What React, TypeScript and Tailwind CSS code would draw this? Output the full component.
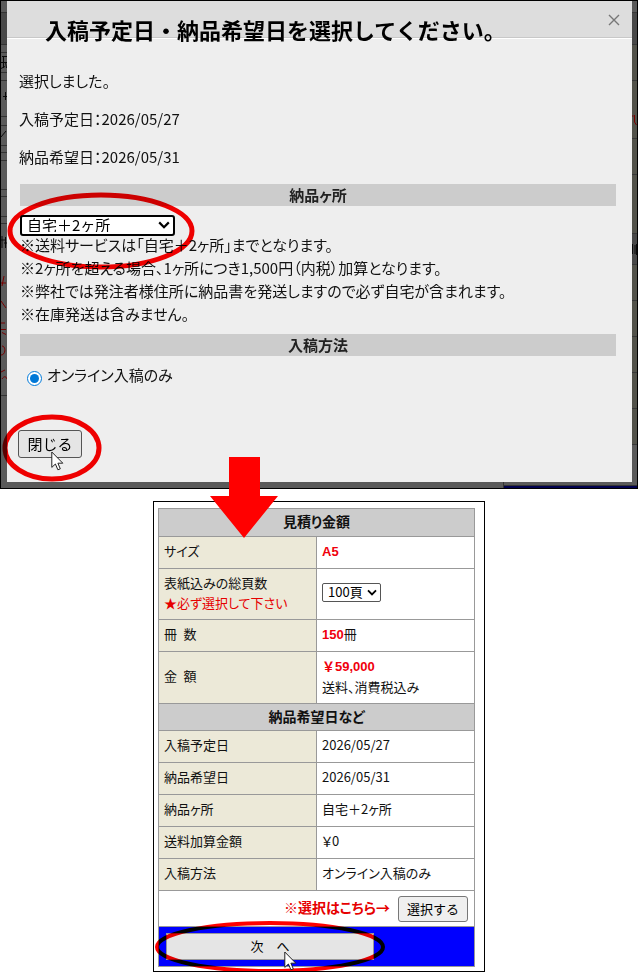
import React from "react";

const NOTES = [
  "※送料サービスは「自宅＋2ヶ所」までとなります。",
  "※2ヶ所を超える場合、1ヶ所につき1,500円（内税）加算となります。",
  "※弊社では発注者様住所に納品書を発送しますので必ず自宅が含まれます。",
  "※在庫発送は含みません。",
];

const DELIVERY_ROWS: [string, string][] = [
  ["入稿予定日", "2026/05/27"],
  ["納品希望日", "2026/05/31"],
  ["納品ヶ所", "自宅＋2ヶ所"],
  ["送料加算金額", "￥0"],
  ["入稿方法", "オンライン入稿のみ"],
];

function Chevron({ className }: { className: string }) {
  return (
    <svg className={className} viewBox="0 0 12 8" fill="none" stroke="currentColor" strokeWidth="2.2" aria-hidden="true">
      <path d="M1.2 1.4 6 6.2l4.800-4.800" />
    </svg>
  );
}

function Cursor({ className }: { className: string }) {
  return (
    <svg className={className} width="13" height="20" viewBox="0 0 13 20" fill="#fff" stroke="#222" strokeWidth="1" aria-hidden="true">
      <path d="M.8 1v15.400l3.600-3.400 2.500 5.800 2.400-1-2.400-5.600h4.900z" />
    </svg>
  );
}

/* Edge of the dimmed page that shows to the left of the dialog */
function LeftEdge() {
  return (
    <svg className="h-[481px] w-[6px] shrink-0 bg-[#5a5a5a]" viewBox="0 0 6 481" aria-hidden="true">
      <rect y="11" width="6" height="33" fill="#484848" />
      <path
        d="M0 11.500h6M0 43.500h6M0 51.500h6M0 71.500h6M0 79.500h6M0 115.500h6M0 124.500h6M0 144.500h6M0 151.500h6M0 159.500h6M0 188.500h6M0 195.500h6M0 215.500h6M0 222.500h6M0 394.500h6"
        stroke="#333"
      />
      <path d="M1 55.500h5M2.500 55v12M0 61.500h6M4.500 61l1 6M0 67.500l4-2M2 95.500h4M4.500 91v8M0 136l5-6M1 235v12M0 239h4M4.500 236v11M3 242h3" stroke="#0a0a0a" fill="none" />
      <path d="M0 282h5M3 275l-2 10M0 300l5 7M0 322h4M0 328.500h5M1 331.500l4 2M1 345c4 0 4 9-1 9M0 371l4-2M1 378c2-3 4-3 5 0" stroke="#700" fill="none" />
    </svg>
  );
}

function RightEdge() {
  return (
    <svg className="h-[481px] w-[5px] shrink-0 bg-[#5a5a5a]" viewBox="0 0 5 481" aria-hidden="true">
      <rect y="11" width="5" height="433" fill="#52524a" />
      <rect y="11" width="5" height="33" fill="#484848" />
      <rect y="232" width="5" height="32" fill="#484848" />
      <path
        d="M0 11.500h5M0 43.500h5M0 79.500h5M0 137.500h5M0 173.500h5M0 232.500h5M0 263.500h5M0 299.500h5M0 335.500h5M0 371.500h5M0 407.500h5M0 443.500h5"
        stroke="#383838"
      />
      <path d="M0 115h1.500M2.500 114v7l2 3" stroke="#700" fill="none" />
      <path d="M.5 243v10M3 244v9M4.500 243v11" stroke="#0a0a0a" />
    </svg>
  );
}

function SectionBar({ children }: { children: React.ReactNode }) {
  return <h2 className="bg-[#ccc] text-center text-[15px] leading-[22px] font-bold text-[#222]">{children}</h2>;
}

function Dialog() {
  return (
    <section className="border border-black bg-[#5a5a5a]">
      <div className="flex">
        <LeftEdge />
        <div role="dialog" aria-labelledby="dialog-title" className="h-[481px] min-w-0 flex-1 bg-[#eee]">
          <header className="flex h-[37px] justify-between border-b border-[#c8c8c8] bg-[#ddd] pr-3 pl-[38px]">
            <h1 id="dialog-title" className="pt-3 text-[22px] leading-8 font-bold whitespace-nowrap text-black [font-feature-settings:normal]">
              入稿予定日・納品希望日を選択してください。
            </h1>
            <button type="button" aria-label="閉じる" className="flex h-[37px] items-center text-[#777]">
              <svg width="12" height="12" viewBox="0 0 12 12" stroke="currentColor" strokeWidth="1.400" aria-hidden="true">
                <path d="M1 1l10 10M11 1 1 11" />
              </svg>
            </button>
          </header>
          <div className="border-t border-white px-3 pt-[31px] text-[15px] leading-[22px] text-[#111]">
            <p>選択しました。</p>
            <p className="mt-4">入稿予定日：2026/05/27</p>
            <p className="mt-4">納品希望日：2026/05/31</p>
            <div className="mt-4 mr-1 ml-[1px]">
              <SectionBar>納品ヶ所</SectionBar>
              <div className="relative mt-2 h-[21px] w-[155px]">
                <select
                  aria-label="納品ヶ所"
                  className="h-[21px] w-full appearance-none rounded-[3px] border-2 border-black bg-white pb-[2px] pl-[5px] text-[15px] leading-[15px] text-black [font-feature-settings:normal]"
                >
                  <option>自宅＋2ヶ所</option>
                </select>
                <Chevron className="pointer-events-none absolute top-[7px] right-[5px] h-2 w-3 text-black" />
                <svg className="pointer-events-none absolute -top-[23px] -left-[13px] z-10 mix-blend-multiply" width="188" height="80" viewBox="0 0 188 80" fill="none" stroke="#f00" strokeWidth="5" aria-hidden="true">
                  <ellipse cx="94" cy="40" rx="91" ry="36" />
                </svg>
              </div>
              <ul className="-mt-[2px] leading-[23px]">
                {NOTES.map((note) => (
                  <li key={note}>{note}</li>
                ))}
              </ul>
              <div className="mt-[9px]">
                <SectionBar>入稿方法</SectionBar>
              </div>
              <label className="mt-2 flex gap-[5px] pl-[7px]">
                <input type="radio" name="method" defaultChecked className="mt-[7px] size-[15px] accent-[#0078d7]" />
                オンライン入稿のみ
              </label>
            </div>
            <div className="relative mt-11 -ml-[1px] w-16">
              <button type="button" className="block h-7 w-full rounded-[3px] border border-[#555] bg-[#e5e5e5] text-[15px] leading-[26px] text-black [font-feature-settings:normal]">
                閉じる
              </button>
              <svg className="pointer-events-none absolute -top-4 -left-4 mix-blend-multiply" width="100" height="68" viewBox="0 0 100 68" fill="none" stroke="#f00" strokeWidth="5" aria-hidden="true">
                <ellipse cx="50" cy="34" rx="47" ry="31" />
              </svg>
              <Cursor className="pointer-events-none absolute top-[21px] left-[33px]" />
            </div>
          </div>
        </div>
        <RightEdge />
      </div>
      <div className="flex h-[6px]">
        <div className="flex-1" />
        <div className="w-[134px] border-l border-[#333]">
          <div className="mt-[3px] h-[3px] border-t border-[#333] bg-[#00004d]" />
        </div>
      </div>
    </section>
  );
}

const LABEL = "w-1/2 border border-[#999] bg-[#ece9d8] pb-[3px] pl-[5px] text-left font-normal";
const VALUE = "border border-[#999] bg-white pb-[3px] pl-[5px]";
const HEAD = "border border-[#999] bg-[#ccc] pb-[3px] text-[14px] font-bold";
const FIGURE = "font-['Liberation_Sans','Noto_Sans_CJK_JP',sans-serif] text-[#f0000c] [font-feature-settings:normal]";

function Estimate() {
  return (
    <section className="relative mx-auto mt-3 w-[332px] border border-black bg-white pt-[6px] pr-[9px] pb-1 pl-1">
      <svg className="pointer-events-none absolute -top-[45px] left-14" width="68" height="82" viewBox="0 0 68 82" fill="#f00" aria-hidden="true">
        <path d="M19 0h31v39h18L34 81 0 39h19z" />
      </svg>
      <table className="w-full table-fixed border-collapse text-[13px] leading-5 text-[#111]">
        <tbody>
          <tr className="h-7">
            <th colSpan={2} className={HEAD}>見積り金額</th>
          </tr>
          <tr className="h-8">
            <th className={LABEL}>サイズ</th>
            <td className={VALUE}><b className={FIGURE}>A5</b></td>
          </tr>
          <tr className="h-[51px]">
            <th className={LABEL}>
              <label htmlFor="pages">表紙込みの総頁数</label>
              <div className="text-[#e60000]">★必ず選択して下さい</div>
            </th>
            <td className={VALUE}>
              <div className="relative h-[19px] w-[59px]">
                <select id="pages" className="block h-full w-full appearance-none rounded-[2px] border border-[#555] bg-white pb-[1px] pl-[5px] text-[13px] leading-4 text-black">
                  <option>100頁</option>
                </select>
                <Chevron className="pointer-events-none absolute top-[6px] right-1 h-[7px] w-[10px] text-black" />
              </div>
            </td>
          </tr>
          <tr className="h-8">
            <th className={LABEL}>冊&ensp;数</th>
            <td className={VALUE}><b className={FIGURE}>150</b>冊</td>
          </tr>
          <tr className="h-[52px]">
            <th className={LABEL}>金&ensp;額</th>
            <td className={VALUE}>
              <div className="leading-5"><b className={FIGURE}>￥59,000</b></div>
              <div>送料、消費税込み</div>
            </td>
          </tr>
          <tr className="h-[27px]">
            <th colSpan={2} className={HEAD}>納品希望日など</th>
          </tr>
          {DELIVERY_ROWS.map(([label, value]) => (
            <tr key={label} className="h-8">
              <th className={LABEL}>{label}</th>
              <td className={VALUE}>{value}</td>
            </tr>
          ))}
          <tr className="h-9">
            <td colSpan={2} className="border border-[#999] bg-white">
              <div className="flex items-center justify-end gap-2 pr-[6px]">
                <b className="pb-1 text-[14px] text-[#e60000]">※選択はこちら→</b>
                <button type="button" className="h-[26px] w-[70px] rounded-[3px] border border-[#777] bg-[#efefef] text-[13px] text-black [font-feature-settings:normal]">
                  選択する
                </button>
              </div>
            </td>
          </tr>
          <tr className="h-10">
            <td colSpan={2} className="border border-[#999] bg-[#00f]">
              <div className="relative ml-[7px] h-[27px] w-[208px]">
                <button type="button" className="block h-full w-full border border-[#999] bg-[#e5e5e5] pb-[2px] text-[13px] text-black [font-feature-settings:normal]">
                  次　へ
                </button>
                <svg className="pointer-events-none absolute -top-3 -left-[11px] mix-blend-multiply" width="231" height="52" viewBox="0 0 231 52" fill="none" stroke="#f00" strokeWidth="4" aria-hidden="true">
                  <ellipse cx="115" cy="26" rx="113" ry="24" />
                </svg>
                <Cursor className="pointer-events-none absolute top-[18px] left-[118px]" />
              </div>
            </td>
          </tr>
        </tbody>
      </table>
    </section>
  );
}

export default function App() {
  return (
    <main className="bg-white font-['Noto_Sans_CJK_JP',sans-serif] [font-feature-settings:'palt']">
      <Dialog />
      <Estimate />
    </main>
  );
}
